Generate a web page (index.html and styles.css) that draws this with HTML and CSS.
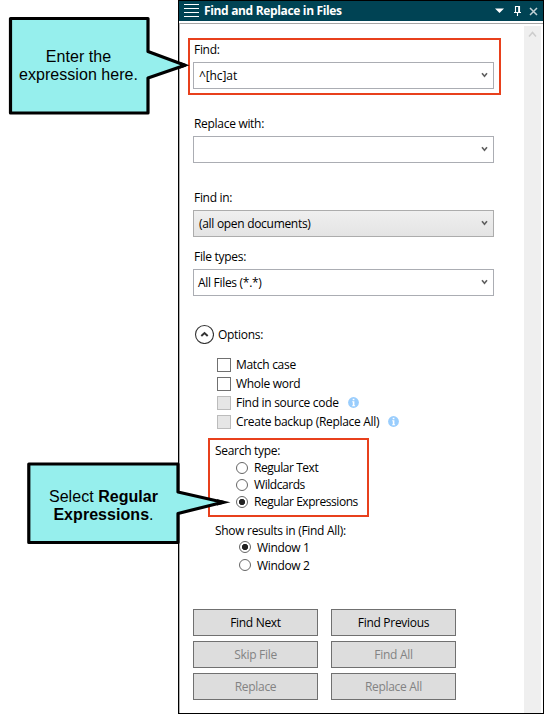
FILE: index.html
```html
<!DOCTYPE html>
<html lang="en">
<head>
<meta charset="utf-8">
<title>Find and Replace in Files</title>
<link rel="stylesheet" href="styles.css">
</head>
<body>
<svg width="0" height="0" class="defs">
  <symbol id="chev" viewBox="0 0 7 6"><path d="M1 1.300 3.500 4.300 6 1.300" fill="none" stroke="#606060" stroke-width="1.600"/></symbol>
  <symbol id="info" viewBox="0 0 11 11"><circle cx="5.5" cy="5.5" r="5.4" fill="#99cdfd"/><path d="M4.7 1.7h1.7v1.5H4.7zM4.2 4.2h2.2v4h.7v1H4.2v-1h.6v-3h-.6z" fill="#fff"/></symbol>
</svg>
<main class="panel">
  <header class="titlebar">
    <svg class="menu" width="15" height="14" viewBox="0 0 15 14"><path d="M0 .5h15M0 4.5h15M0 8.5h15M0 12.5h15" stroke="#fff"/></svg>
    <h1>Find and Replace in Files</h1>
    <svg class="tools" width="43" height="12" viewBox="0 0 43 12">
      <path d="M0 3.500h9L4.500 8z" fill="#fff"/>
      <path d="M20.500 7V1.500h4V7M19 7.500h7M22.500 8v3M23.700 1v6" fill="none" stroke="#fff" stroke-width="1.1"/>
      <path d="m35 3 7 7m0-7-7 7" stroke="#c3d2d6" stroke-width="1.500"/>
    </svg>
  </header>
  <div class="body">
    <div class="form">
      <section class="field marked">
        <label>Find:</label>
        <div class="combo"><span>^[hc]at</span><svg width="7" height="6"><use href="#chev"/></svg></div>
      </section>
      <section class="field replace">
        <label>Replace with:</label>
        <div class="combo"><span></span><svg width="7" height="6"><use href="#chev"/></svg></div>
      </section>
      <section class="field where">
        <label>Find in:</label>
        <div class="combo shaded"><span>(all open documents)</span><svg width="7" height="6"><use href="#chev"/></svg></div>
      </section>
      <section class="field types">
        <label>File types:</label>
        <div class="combo"><span>All Files (*.*)</span><svg width="7" height="6"><use href="#chev"/></svg></div>
      </section>
      <div class="options">
        <svg width="20" height="20" viewBox="0 0 20 20"><circle cx="10.500" cy="10.500" r="9" fill="#fff" stroke="#333" stroke-width="1.1"/><path d="m7.300 12 3.200-3 3.200 3" fill="none" stroke="#333" stroke-width="2"/></svg>
        <span>Options:</span>
      </div>
      <div class="checks">
        <div class="check"><i></i><span>Match case</span></div>
        <div class="check"><i></i><span>Whole word</span></div>
        <div class="check off"><i></i><span>Find in source code</span><svg width="11" height="11"><use href="#info"/></svg></div>
        <div class="check off"><i></i><span>Create backup (Replace All)</span><svg width="11" height="11"><use href="#info"/></svg></div>
      </div>
      <section class="search">
        <div class="caption">Search type:</div>
        <div class="radio"><i></i><span>Regular Text</span></div>
        <div class="radio"><i></i><span>Wildcards</span></div>
        <div class="radio on"><i></i><span>Regular Expressions</span></div>
      </section>
      <section class="results">
        <div class="caption">Show results in (Find All):</div>
        <div class="radio on"><i></i><span>Window 1</span></div>
        <div class="radio"><i></i><span>Window 2</span></div>
      </section>
      <div class="buttons">
        <button>Find Next</button><button>Find Previous</button>
        <button disabled>Skip File</button><button disabled>Find All</button>
        <button disabled>Replace</button><button disabled>Replace All</button>
      </div>
    </div>
    <div class="scroll"><svg width="9" height="7" viewBox="0 0 9 7"><path d="M1 5.5 4.5 1.5 8 5.5" fill="none" stroke="#cdcdcd" stroke-width="1.5"/></svg></div>
  </div>
</main>
<aside class="callout first">
  <svg width="184" height="102" viewBox="0 0 184 102"><path d="M2.500 2.500H140V35.500L177 49.200 140 62V97H2.500z" fill="#96efed" stroke="#000" stroke-width="3.200" stroke-linejoin="round"/><path d="m172 46 9.500 3.200L172 52.400z"/></svg>
  <p>Enter the<br>expression here.</p>
</aside>
<aside class="callout second">
  <svg width="206" height="86" viewBox="0 0 206 86"><path d="M1.800 3H151V31L196 41.200 151 52.500V81.500H1.800z" fill="#96efed" stroke="#000" stroke-width="3.200" stroke-linejoin="round"/><path d="m190 38.200 13.500 3L190 44.400z"/></svg>
  <p>Select <b>Regular<br>Expressions</b>.</p>
</aside>
</body>
</html>
```
FILE: styles.css
```css
* { box-sizing: border-box; }
body { margin: 0; width: 544px; height: 714px; overflow: hidden; background: #fff; position: relative; font: 12px/16px "Open Sans", "Noto Sans", sans-serif; letter-spacing: -.3px; color: #000; white-space: nowrap; }
svg { display: block; flex: none; }
.defs { position: absolute; }
.panel { margin-left: 178px; width: 366px; height: 714px; border: 1px solid #000; display: flex; flex-direction: column; }
.titlebar { height: 20px; background: #004354; display: flex; align-items: center; padding: 0 5px; color: #fff; }
.titlebar h1 { margin: 0 auto 0 5px; font-size: 12px; line-height: 18px; font-weight: 700; letter-spacing: -.34px; }
.body { margin-top: 2px; flex: 1; border-top: 1px solid #a5a5a5; border-left: 1px solid #b0b0b0; display: flex; justify-content: space-between; }
.form { width: 330px; padding: 14px 0 0 8px; }
.scroll { width: 17px; margin: 2px 2px 0 0; background: #efefef; padding: 5px 4px; }
.field { width: 301px; margin-left: 5px; }
.field label { display: block; height: 20px; padding-left: 1px; }
.marked { width: 313px; height: 57px; margin-left: 0; border: 2px solid #e8401c; padding: 2px 5px 0 3px; }
.marked .combo { letter-spacing: -.1px; }
.replace { margin-top: 21px; }
.where { margin-top: 27px; }
.types { margin-top: 12px; }
.combo { height: 27px; width: 301px; border: 1px solid #abadb3; display: flex; justify-content: space-between; align-items: center; padding: 0 5px; }
.combo svg { margin-bottom: 2px; }
.types .combo { padding-left: 4px; }
.shaded { background: linear-gradient(#efefef, #e4e4e4); border-color: #acacac; }
.options { display: flex; align-items: center; gap: 4px; height: 20px; margin: 28px 0 0 6px; line-height: 18px; }
.options span { padding-top: 1px; }
.checks { margin: 11px 0 0 29px; }
.check { display: flex; align-items: center; height: 19px; }
.check i { width: 14px; height: 14px; border: 1px solid #707070; margin-right: 5px; }
.check.off i { border-color: #bcbcbc; background: #e6e6e6; }
.check svg { margin-left: 9px; }
.search { margin: 7px 0 0 20px; width: 161px; height: 79px; border: 2px solid #e8401c; padding: 2px 0 0 5px; }
.caption { height: 17px; line-height: 18px; }
.radio { display: flex; align-items: center; height: 17px; padding-left: 21px; }
.radio i { width: 12px; height: 12px; border: 1px solid #666; border-radius: 50%; margin-right: 6px; }
.radio.on i { background: radial-gradient(circle, #222 2.8px, #fff 3.4px); }
.search .radio { letter-spacing: -.45px; }
.results { margin: 5px 0 0 27px; }
.results .radio { height: 18px; padding-left: 24px; letter-spacing: -.35px; }
.results .radio span { padding-top: 2px; }
.results .caption { height: 16px; }
.buttons { display: grid; grid-template-columns: 125px 125px; grid-auto-rows: 27px; gap: 5px 13px; margin: 35px 0 0 5px; }
button { font: inherit; letter-spacing: inherit; color: #000; background: #ddd; border: 1px solid #707070; padding: 0; border-radius: 0; }
button:disabled { color: #838383; }
.callout { position: absolute; font: 16px/18px "Liberation Sans", Arial, sans-serif; letter-spacing: .05px; text-align: center; }
.callout p { position: absolute; margin: 0; left: 0; }
.first { left: 8px; top: 16px; }
.first p { width: 141px; top: 32px; }
.second { left: 27px; top: 461px; }
.second p { width: 153px; top: 27px; }
```
